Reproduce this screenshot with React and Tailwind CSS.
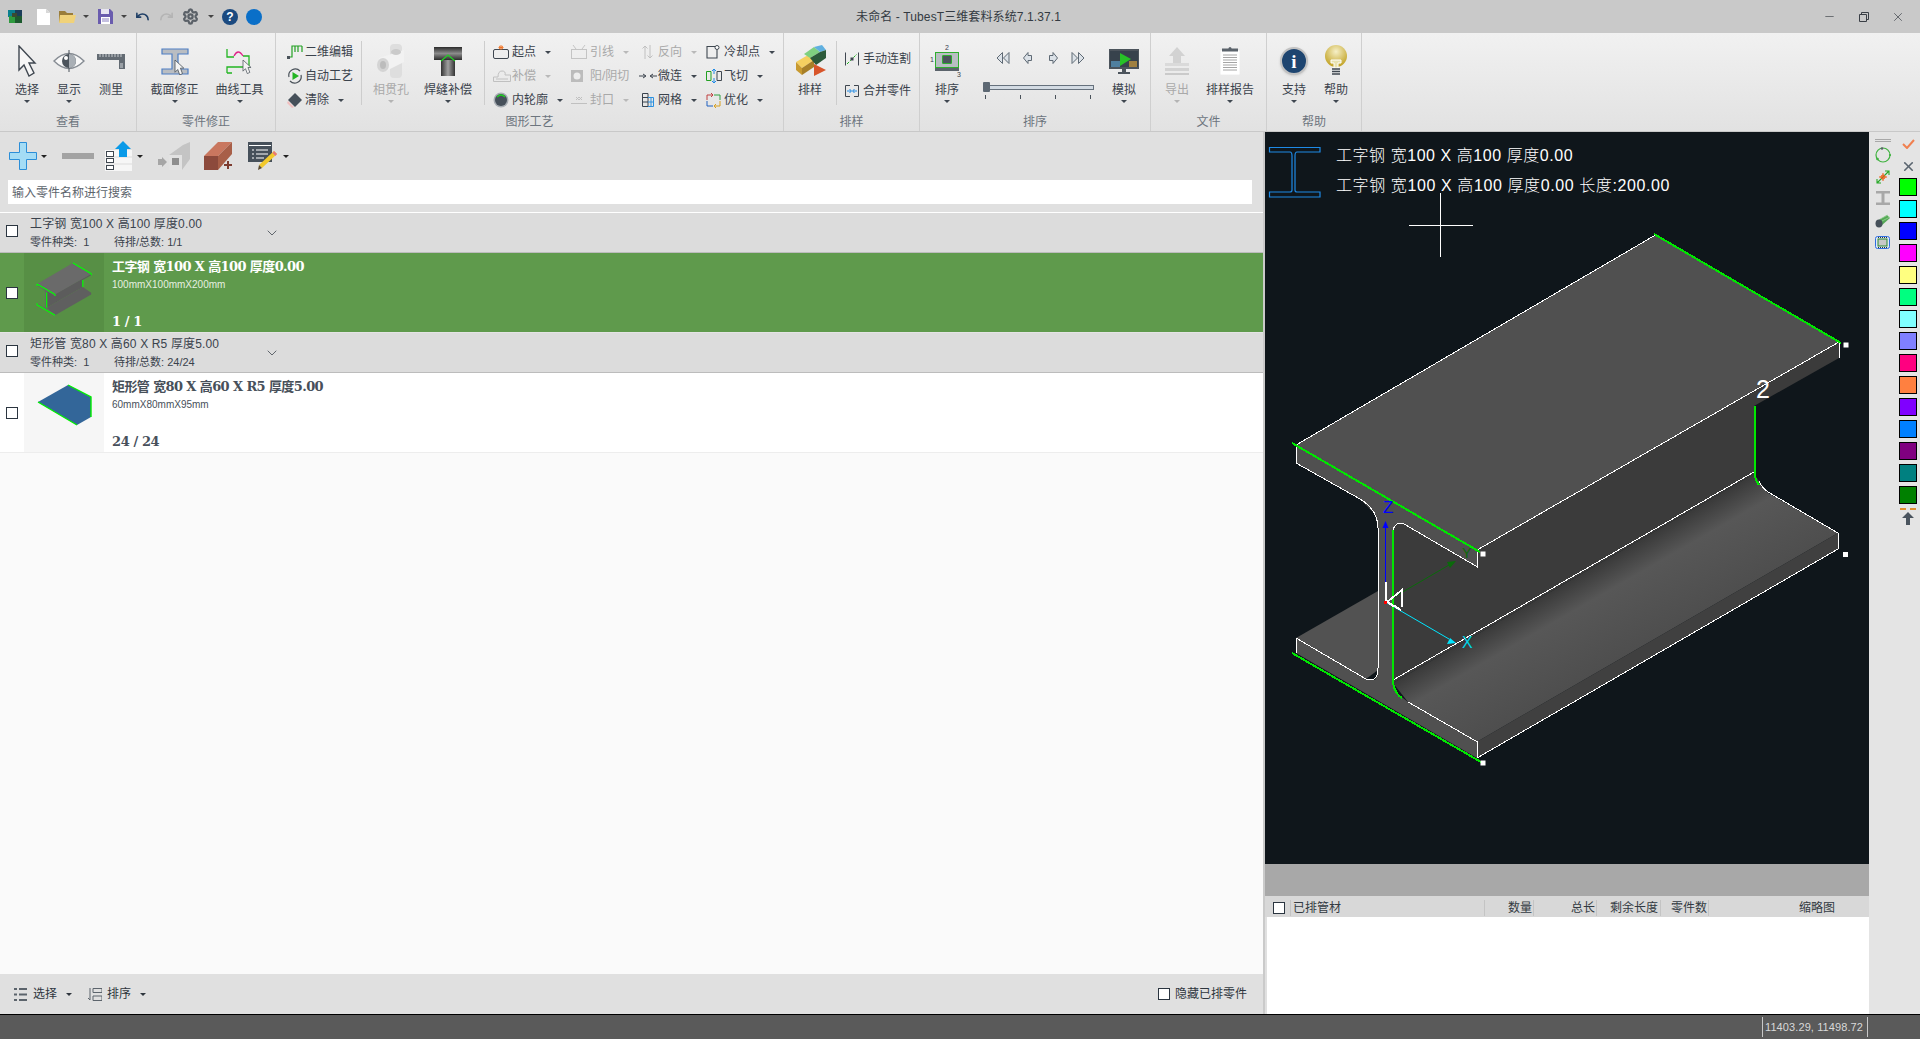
import { Undo, Redo, Settings, Minus, X, ChevronDown } from 'lucide-react';

const swatches = [
  'bg-[#00ff00]', 'bg-[#00ffff]', 'bg-[#0000ff]', 'bg-[#ff00ff]', 'bg-[#ffff80]',
  'bg-[#00ff80]', 'bg-[#80ffff]', 'bg-[#8080ff]', 'bg-[#ff0080]', 'bg-[#ff8040]',
  'bg-[#8000ff]', 'bg-[#0080ff]', 'bg-[#800080]', 'bg-[#008080]', 'bg-[#008000]',
];

const sectionPoints =
  '1296,445 1477,550 1477,566.7 1404,524 1396,524 1393,530 1393,683 1398,694 1408,702 1477,741.7 1477,758 1296,653 1296,638 1366,679 1375,680 1378,670 1378,528 1375,514 1360,499 1296,463';

function Caret({ className = 'border-t-[#3f4750]' }) {
  return <span className={`inline-block h-0 w-0 border-x-[3px] border-t-[3px] border-x-transparent ${className}`} />;
}

function Checkbox({ className = '' }) {
  return <span className={`block h-[12px] w-[12px] shrink-0 border border-[#2b3540] bg-white ${className}`} />;
}

function RibbonGroup({ label, className, children }) {
  return (
    <div className={`flex shrink-0 flex-col border-r border-[#cfcfcf] ${className}`}>
      <div className="flex h-[80px]">{children}</div>
      <div className="h-[18px] text-center leading-[18px] text-[#6d757e]">{label}</div>
    </div>
  );
}

function BigButton({ icon, label, width, disabled, caret = true }) {
  return (
    <div className={`flex shrink-0 flex-col items-center pt-[8px] ${width}`}>
      <div className="flex h-[40px] items-center justify-center">{icon}</div>
      <div className={`h-[18px] whitespace-nowrap leading-[18px] ${disabled ? 'text-[#a9a9a9]' : 'text-[#3a424c]'}`}>{label}</div>
      {caret && <Caret className={`mt-[1px] ${disabled ? 'border-t-[#b4b4b4]' : 'border-t-[#3f4750]'}`} />}
    </div>
  );
}

function SmallButton({ icon, label, slot, disabled, caret = true }) {
  return (
    <div className="flex h-[24px] items-center whitespace-nowrap">
      <span className={`flex shrink-0 items-center ${slot}`}>{icon}</span>
      <span className={disabled ? 'text-[#a9a9a9]' : 'text-[#3a424c]'}>{label}</span>
      {caret && <Caret className={`ml-[9px] ${disabled ? 'border-t-[#b9b9b9]' : 'border-t-[#3f4750]'}`} />}
    </div>
  );
}

function PointerIcon({ x = 0, y = 0, scale = 1 }) {
  return (
    <path
      transform={`translate(${x} ${y}) scale(${scale})`}
      d="M0 0 L13 12 H8 L11 20 L7 22 L4 14 L0 18 Z"
      fill="#f4f4f4"
      stroke="#4a525a"
      strokeWidth="1.2"
    />
  );
}

function TubeThumb() {
  return (
    <svg viewBox="0 0 80 79" className="h-[79px] w-[80px]">
      <polygon points="14,29 44,12 67,24 67,44 53,52" fill="#336699" />
      <path d="M14 29 L53 52 M44 12 L67 24 V44" fill="none" stroke="#00ee00" strokeWidth="1.4" />
    </svg>
  );
}

function BeamThumb() {
  return (
    <svg viewBox="1166 135 800 790" className="h-[79px] w-[80px]">
      <polygon points="1393,515 1477,545 1839,342 1839,358 1754,406 1754,474 1393,683" fill="#5c5c5c" />
      <polygon points="1393,683 1754,474 1838,533 1838,549 1477,758" fill="#5f5f5f" />
      <polygon points="1296,445 1655,235 1839,342 1477,550" fill="#6a6a6a" />
      <polygon points={sectionPoints} fill="#666666" />
      <path
        d="M1296 445 L1477 550 M1655 235 L1839 342 M1296 653 L1477 758 M1393 530 V683 M1754 406 V474 M1839 342 V358 M1296 445 V463 M1296 638 V653 M1477 550 V566"
        fill="none"
        stroke="#00ff00"
        strokeWidth="12"
      />
    </svg>
  );
}

function Canvas() {
  return (
    <div className="relative h-[732px] w-full bg-[#0f161b]">
      <svg viewBox="1265 132 604 732" className="absolute inset-0 h-full w-full">
        <defs>
          <linearGradient id="flange" gradientUnits="userSpaceOnUse" x1="1393" y1="683" x2="1439" y2="763">
            <stop offset="0" stopColor="#3a3a3a" />
            <stop offset="0.3" stopColor="#575757" />
            <stop offset="1" stopColor="#4e4e4e" />
          </linearGradient>
        </defs>

        {/* beam faces */}
        <polygon points="1296,638 1378,591 1378,670 1366,679" fill="#525252" />
        <polygon points="1393,515 1477,545 1839,342 1839,358 1754,406 1754,474 1393,683" fill="#3b3b3b" />
        <polygon points="1393,683 1754,474 1768,493 1838,533 1477,741.7 1408,702" fill="url(#flange)" />
        <polygon points="1477,741.7 1838,533 1838,549 1477,758" fill="#404040" />
        <polygon points="1296,445 1655.5,235 1839,342 1477,550" fill="#505050" />
        <polygon points={sectionPoints} fill="#505050" />

        {/* white edges */}
        <g fill="none" stroke="#ffffff" strokeWidth="1" shapeRendering="crispEdges">
          <path d="M1296 445 L1655.5 235" />
          <path d="M1477 550 L1839 342 V358" />
          <path d="M1296 445 V463 L1360 499 Q1378 510 1378 528 V668 Q1378 683 1366 679 L1296 638 V653" />
          <path d="M1477 550 V566.7 L1404 524 Q1396 521 1393 530" />
          <path d="M1393 680 L1754 472" />
          <path d="M1408 702 L1477 741.7 V758 L1838 549 V533 L1768 492 Q1762 488 1759 481" />
        </g>

        {/* green profile edges */}
        <g fill="none" stroke="#00e600" strokeWidth="2" shapeRendering="crispEdges">
          <path d="M1654 234 L1841 343" />
          <path d="M1292 443 L1480 552" />
          <path d="M1292 653 L1481 762" />
          <path d="M1393 530 V683 Q1395 694 1402 698" />
          <path d="M1754.5 406 V472 Q1755 480 1759 485" />
        </g>

        {/* handle points */}
        <g fill="#ffffff">
          <rect x="1843.5" y="342.5" width="5" height="5" />
          <rect x="1480.5" y="551.5" width="5" height="5" />
          <rect x="1480.5" y="760.5" width="5" height="5" />
          <rect x="1843" y="552" width="5" height="5" />
        </g>

        {/* crosshair */}
        <path d="M1409 225 H1472.5 M1440.5 193 V257" stroke="#ffffff" strokeWidth="1" shapeRendering="crispEdges" />

        {/* axes */}
        <path d="M1385.5 602 V527" stroke="#0000ff" strokeWidth="1" />
        <polygon points="1385.5,521 1382.5,528 1388.5,528" fill="#0000ff" />
        <path d="M1385.5 602 L1449 565" stroke="#0a6a0a" strokeWidth="1" />
        <polygon points="1456,561 1447,562 1450,568" fill="#0a6a0a" />
        <path d="M1385.5 602 L1449 639" stroke="#00e5ff" strokeWidth="1" />
        <polygon points="1456,643 1447,644 1450,638" fill="#00e5ff" />
        <path d="M1385.5 582 V602 M1387 602 L1402 590 V607 M1387 602 L1401 610 M1392 606 H1396" fill="none" stroke="#ffffff" strokeWidth="2" shapeRendering="crispEdges" />
        <rect x="1384" y="601" width="3" height="3" fill="#ff0000" />
        <text x="1383" y="513" fill="#0000ff" fontSize="17" fontFamily="Liberation Sans" fontWeight="300">Z</text>
        <text x="1462" y="558" fill="#0a6a0a" fontSize="14" fontFamily="Liberation Sans">Y</text>
        <text x="1462" y="648" fill="#00d5e8" fontSize="16" fontFamily="Liberation Sans">X</text>
        <text x="1763" y="398" fill="#ffffff" fontSize="25" textAnchor="middle" fontFamily="Liberation Sans">2</text>

        {/* section glyph */}
        <path
          d="M1269.5 147.5 H1320 V152 H1297 Q1295 152 1295 156 V190 Q1295 192 1297 192 H1320 V197 H1269.5 V192 H1290 Q1292 192 1292 190 V156 Q1292 152 1290 152 H1269.5 Z"
          fill="none"
          stroke="#1e8ae6"
          strokeWidth="1.2"
        />
      </svg>

      <div className="absolute left-[71px] top-[13px] whitespace-nowrap text-[16px] font-light leading-[22px] tracking-[0.55px] text-white">工字钢 宽100 X 高100 厚度0.00</div>
      <div className="absolute left-[71px] top-[43px] whitespace-nowrap text-[16px] font-light leading-[22px] tracking-[0.6px] text-white">工字钢 宽100 X 高100 厚度0.00 长度:200.00</div>
    </div>
  );
}

function TitleBar() {
  return (
    <div className="flex h-[33px] shrink-0 items-center bg-[#c9c9c9]">
      <div className="flex flex-1 items-center pl-[8px]">
        <svg viewBox="0 0 14 13" className="h-[13px] w-[14px]">
          <rect x="0" y="0" width="7" height="7" fill="#0b7f8f" />
          <rect x="7" y="0" width="7" height="6" fill="#1b3d5a" />
          <rect x="1" y="6" width="7" height="7" fill="#2e9a3e" />
          <rect x="7" y="6" width="7" height="7" fill="#1c5a2e" />
          <rect x="4" y="3" width="5" height="4" fill="#3a4a30" />
        </svg>
        <svg viewBox="0 0 13 16" className="ml-[15px] h-[16px] w-[13px]">
          <path d="M0 0 H9 L13 4 V16 H0 Z" fill="#ffffff" />
          <path d="M9 0 V4 H13" fill="#d8d8d8" />
        </svg>
        <svg viewBox="0 0 17 13" className="ml-[9px] h-[13px] w-[17px]">
          <path d="M0 1 H6 L8 3 H14 V13 H0 Z" fill="#9a7d3a" />
          <path d="M1 5 H17 L15 13 H0 Z" fill="#f0d27a" />
        </svg>
        <Caret className="ml-[7px] border-t-[#444444]" />
        <svg viewBox="0 0 15 15" className="ml-[9px] h-[15px] w-[15px]">
          <path d="M0 0 H12 L15 3 V15 H0 Z" fill="#6a5cae" />
          <rect x="3" y="0" width="8" height="5" fill="#e8e6f2" />
          <rect x="3" y="8" width="9" height="7" fill="#ffffff" />
          <path d="M4 10 H11 M4 12 H11" stroke="#8a80c0" strokeWidth="1" />
        </svg>
        <Caret className="ml-[8px] border-t-[#444444]" />
        <Undo size={15} strokeWidth={2.6} className="ml-[8px] text-[#1f3f66]" />
        <Redo size={15} strokeWidth={2.6} className="ml-[9px] text-[#b4b4b4]" />
        <Settings size={17} strokeWidth={3.2} className="ml-[8px] text-[#5b6168]" />
        <Caret className="ml-[9px] border-t-[#444444]" />
        <div className="ml-[8px] flex h-[16px] w-[16px] items-center justify-center rounded-full bg-[#1b4a80] text-[12px] font-bold leading-none text-white">?</div>
        <div className="ml-[8px] h-[16px] w-[16px] rounded-full bg-[#0a6fc8]" />
      </div>
      <div className="whitespace-nowrap pl-[4px] tracking-[0.1px] text-[#333a42]">未命名 - TubesT三维套料系统7.1.37.1</div>
      <div className="flex flex-1 items-center justify-end pr-[15px] text-[#3a3f46]">
        <Minus size={13} strokeWidth={1.2} />
        <svg viewBox="0 0 10 10" className="ml-[23px] h-[10px] w-[10px]">
          <path d="M0.5 2.5 H7.5 V9.5 H0.5 Z M2.5 2.5 V0.5 H9.5 V7.5 H7.5" fill="none" stroke="#3a3f46" strokeWidth="1" />
        </svg>
        <X size={14} strokeWidth={1.2} className="ml-[22px]" />
      </div>
    </div>
  );
}

function Ribbon() {
  return (
    <div className="flex h-[99px] shrink-0 border-b border-[#c8c8c8] bg-linear-to-b from-[#f1f1f1] to-[#e2e2e2]">
      <RibbonGroup label="查看" className="w-[137px]">
        <div className="flex pl-[6px]">
          <BigButton
            width="w-[42px]"
            label="选择"
            icon={
              <svg viewBox="0 0 20 32" className="h-[32px] w-[20px]">
                <path d="M2 1 L18 18 H12 L17 28 L12 31 L7 20 L2 25 Z" fill="#f6f6f6" stroke="#3f4750" strokeWidth="1.4" />
              </svg>
            }
          />
          <BigButton
            width="w-[42px]"
            label="显示"
            icon={
              <svg viewBox="0 0 32 24" className="h-[24px] w-[32px]">
                <path d="M1 12 Q16 -3 31 12 Q16 27 1 12 Z" fill="#f8f8f8" stroke="#878d94" strokeWidth="1.4" />
                <path d="M16 1 V23" stroke="#4a525a" strokeWidth="1" />
                <circle cx="16" cy="12" r="7" fill="#4c545c" />
                <path d="M16 5 A7 7 0 0 1 16 19 Z" fill="#a9afb5" />
                <circle cx="13" cy="9" r="2" fill="#ffffff" />
              </svg>
            }
          />
          <BigButton
            width="w-[42px]"
            caret={false}
            label="测里"
            icon={
              <svg viewBox="0 0 28 15" className="h-[15px] w-[28px]">
                <path d="M0 0 H28 V15 H22 V6 H0 Z" fill="#636b73" />
                <path d="M3 0 V3 M6 0 V3 M9 0 V3 M12 0 V3 M15 0 V3 M18 0 V3 M21 0 V3 M24 0 V3" stroke="#c8ccd0" strokeWidth="1" />
                <rect x="23" y="9" width="3" height="5" fill="#9aa0a6" />
              </svg>
            }
          />
        </div>
      </RibbonGroup>

      <RibbonGroup label="零件修正" className="w-[139px]">
        <div className="flex pl-[5px]">
          <BigButton
            width="w-[65px]"
            label="截面修正"
            icon={
              <svg viewBox="0 0 28 27" className="h-[27px] w-[28px]">
                <path d="M1 1 H27 V6 H17 V21 H27 V26 H1 V21 H11 V6 H1 Z" fill="#b9bdc2" stroke="#4f7fc4" strokeWidth="1.2" />
                <PointerIcon x={14} y={12} scale={0.68} />
              </svg>
            }
          />
          <BigButton
            width="w-[65px]"
            label="曲线工具"
            icon={
              <svg viewBox="0 0 28 26" className="h-[26px] w-[28px]">
                <path d="M1 1 V9 H8 M1 25 V19 H23 V8 H17 M1 25 H6" fill="none" stroke="#22b522" strokeWidth="1.3" />
                <path d="M8 8 Q12 0 17 8" fill="none" stroke="#e0258a" strokeWidth="1.3" />
                <PointerIcon x={17} y={12} scale={0.62} />
              </svg>
            }
          />
        </div>
      </RibbonGroup>

      <RibbonGroup label="图形工艺" className="w-[508px]">
        <div className="flex pl-[11px] pt-[7px]">
          <div className="w-[74px]">
            <SmallButton
              caret={false}
              slot="w-[18px]"
              label="二维编辑"
              icon={
                <svg viewBox="0 0 16 14" className="h-[14px] w-[16px]">
                  <path d="M1 12 H5 V1 H15 M15 1 V7 M8 1 V7 M11 1 V7" fill="none" stroke="#22a022" strokeWidth="1.2" />
                  <rect x="0" y="11" width="3" height="3" fill="#4a525a" />
                </svg>
              }
            />
            <SmallButton
              caret={false}
              slot="w-[18px]"
              label="自动工艺"
              icon={
                <svg viewBox="0 0 16 16" className="h-[16px] w-[16px]">
                  <path d="M2 9 A6.5 6.5 0 0 1 13 3 M14 7 A6.5 6.5 0 0 1 3 13" fill="none" stroke="#4a525a" strokeWidth="1.2" />
                  <polygon points="5.5,4 12,8 5.5,12" fill="#22b522" />
                </svg>
              }
            />
            <SmallButton
              slot="w-[18px]"
              label="清除"
              icon={
                <svg viewBox="0 0 16 16" className="h-[16px] w-[16px]">
                  <polygon points="8,1 15,8 8,15 1,8" fill="#46505a" />
                  <polygon points="1,9 7,15 5,16 0,11" fill="#f2c0c0" />
                </svg>
              }
            />
          </div>
        </div>
        <div className="my-[8px] w-px shrink-0 bg-[#cdcdcd]" />
        <BigButton
          disabled
          width="w-[58px]"
          label="相贯孔"
          icon={
            <svg viewBox="0 0 30 34" className="h-[34px] w-[30px]">
              <rect x="14" y="0" width="12" height="34" rx="4" fill="#dedede" />
              <path d="M3 14 L28 6 V18 L8 28 Z" fill="#f2f2f2" />
              <ellipse cx="20" cy="8" rx="5" ry="3" fill="#cacaca" />
              <ellipse cx="7" cy="21" rx="6" ry="7" fill="#d4d4d4" />
              <ellipse cx="7" cy="21" rx="3" ry="4" fill="#bcbcbc" />
            </svg>
          }
        />
        <BigButton
          width="w-[56px]"
          label="焊缝补偿"
          icon={
            <svg viewBox="0 0 28 29" className="h-[29px] w-[28px]">
              <defs>
                <linearGradient id="pipeH" x1="0" y1="0" x2="0" y2="1">
                  <stop offset="0" stopColor="#2c2c2c" />
                  <stop offset="0.5" stopColor="#8c8c8c" />
                  <stop offset="1" stopColor="#2c2c2c" />
                </linearGradient>
                <linearGradient id="pipeV" x1="0" y1="0" x2="1" y2="0">
                  <stop offset="0" stopColor="#333333" />
                  <stop offset="0.5" stopColor="#a0a0a0" />
                  <stop offset="1" stopColor="#333333" />
                </linearGradient>
              </defs>
              <rect x="7" y="9" width="14" height="20" fill="url(#pipeV)" />
              <rect x="0" y="0" width="28" height="13" fill="url(#pipeH)" />
              <path d="M7 14 L14 8 L21 14" fill="none" stroke="#22d022" strokeWidth="1.2" />
            </svg>
          }
        />
        <div className="my-[8px] ml-[8px] w-px shrink-0 bg-[#cdcdcd]" />
        <div className="ml-[8px] w-[78px] shrink-0 pt-[7px]">
          <SmallButton
            slot="w-[19px]"
            label="起点"
            icon={
              <svg viewBox="0 0 16 14" className="h-[14px] w-[16px]">
                <rect x="0.5" y="4.5" width="15" height="9" rx="1.5" fill="none" stroke="#3f4750" />
                <path d="M8 0 V5 M5.5 2.5 H10.5 M6 1 L10 4 M10 1 L6 4" stroke="#f07020" strokeWidth="0.9" />
              </svg>
            }
          />
          <SmallButton
            disabled
            slot="w-[19px]"
            label="补偿"
            icon={
              <svg viewBox="0 0 18 12" className="h-[12px] w-[18px]">
                <path d="M0.5 11.5 V7 H5 Q5 1 9 1 Q13 1 12 5 H17.5 V11.5 Z M3 9 H15" fill="none" stroke="#c0c0c0" />
              </svg>
            }
          />
          <SmallButton
            slot="w-[19px]"
            label="内轮廓"
            icon={
              <svg viewBox="0 0 16 16" className="h-[16px] w-[16px]">
                <circle cx="8" cy="8" r="7.5" fill="#a7adb3" />
                <circle cx="8" cy="8" r="6" fill="#46505a" />
                <path d="M4 5 Q8 1 12 5" fill="none" stroke="#22d022" strokeWidth="1.2" />
              </svg>
            }
          />
        </div>
        <div className="w-[71px] shrink-0 pt-[7px]">
          <SmallButton
            disabled
            slot="w-[19px]"
            label="引线"
            icon={
              <svg viewBox="0 0 16 14" className="h-[14px] w-[16px]">
                <rect x="0.5" y="4.5" width="15" height="9" fill="none" stroke="#c4c4c4" />
                <path d="M2 0 L5 4 M14 0 L11 4" stroke="#c4c4c4" />
              </svg>
            }
          />
          <SmallButton
            disabled
            caret={false}
            slot="w-[19px]"
            label="阳/阴切"
            icon={
              <svg viewBox="0 0 12 12" className="h-[12px] w-[12px]">
                <rect width="12" height="12" fill="#bcbcbc" />
                <circle cx="6" cy="6" r="3.5" fill="#eeeeee" />
              </svg>
            }
          />
          <SmallButton
            disabled
            slot="w-[19px]"
            label="封口"
            icon={
              <svg viewBox="0 0 16 8" className="h-[8px] w-[16px]">
                <path d="M0 7.5 H16 M5 1 L8 4 L11 1 M5 4 L8 1 L11 4" fill="none" stroke="#c0c0c0" />
              </svg>
            }
          />
        </div>
        <div className="w-[64px] shrink-0 pt-[7px]">
          <SmallButton
            disabled
            slot="w-[16px]"
            label="反向"
            icon={
              <svg viewBox="0 0 11 14" className="h-[14px] w-[11px]">
                <path d="M3 14 V1 M0.5 3.5 L3 1 L5.5 3.5 M8 0 V13 M5.5 10.5 L8 13 L10.5 10.5" fill="none" stroke="#c0c0c0" />
              </svg>
            }
          />
          <SmallButton
            slot="w-[16px]"
            label="微连"
            icon={
              <svg viewBox="0 0 18 6" className="-ml-[3px] h-[6px] w-[18px]">
                <path d="M0 3 H6 M4 1 L7 3 L4 5 M12 3 H18 M14 1 L11 3 L14 5" fill="none" stroke="#3a424c" />
              </svg>
            }
          />
          <SmallButton
            slot="w-[16px]"
            label="网格"
            icon={
              <svg viewBox="0 0 12 14" className="h-[14px] w-[12px]">
                <path d="M0.5 0.5 H6 V13.5 H0.5 Z M0.5 4.5 H6 M0.5 9 H6" fill="none" stroke="#3a424c" />
                <path d="M6 4.5 H11.5 V13.5 H6 M6 9 H11.5 M9 4.5 V13.5" fill="none" stroke="#2a90e0" />
              </svg>
            }
          />
        </div>
        <div className="shrink-0 pt-[7px]">
          <SmallButton
            slot="w-[18px]"
            label="冷却点"
            icon={
              <svg viewBox="0 0 14 14" className="h-[14px] w-[14px]">
                <path d="M9 1.5 H1 V13 H11 V5" fill="none" stroke="#3f4750" strokeWidth="1.1" />
                <circle cx="11" cy="2.5" r="2" fill="#ffffff" stroke="#3f4750" />
              </svg>
            }
          />
          <SmallButton
            slot="w-[18px]"
            label="飞切"
            icon={
              <svg viewBox="0 0 16 14" className="h-[14px] w-[16px]">
                <path d="M0.5 2.5 H5 V11.5 H0.5 Z" fill="none" stroke="#22a022" />
                <path d="M11 2.5 H15.5 V11.5 H11 Z" fill="none" stroke="#3f4750" />
                <path d="M8 0 V5 M6 2 L8 0 L10 2 M8 9 V14 M6 12 L8 14 L10 12" fill="none" stroke="#1e8ae6" />
              </svg>
            }
          />
          <SmallButton
            slot="w-[18px]"
            label="优化"
            icon={
              <svg viewBox="0 0 15 15" className="h-[15px] w-[15px]">
                <path d="M1 7 V2 H7 M5 0 L7 2 L5 4" fill="none" stroke="#c04040" />
                <path d="M8 2 H14 V7" fill="none" stroke="#30a040" />
                <path d="M14 8 V13 H8 M10 11 L8 13 L10 15" fill="none" stroke="#d8a020" />
                <path d="M7 13 H1 V8" fill="none" stroke="#2060c0" />
              </svg>
            }
          />
        </div>
      </RibbonGroup>

      <RibbonGroup label="排样" className="w-[136px]">
        <BigButton
          caret={false}
          width="w-[52px]"
          label="排样"
          icon={
            <svg viewBox="0 0 32 32" className="h-[32px] w-[32px]">
              <polygon points="2,17 14,10 20,15 8,23" fill="#f5d060" />
              <polygon points="2,17 8,23 8,30 2,25" fill="#c89a30" />
              <polygon points="8,23 20,15 20,22 8,30" fill="#a88028" />
              <polygon points="10,9 20,2 26,7 16,13" fill="#80d080" />
              <polygon points="20,2 28,0 32,5 26,7" fill="#60b0e0" />
              <polygon points="16,13 26,7 32,5 32,13 22,20" fill="#2c5a3a" />
              <polygon points="20,19 32,25 20,31" fill="#d8552a" />
            </svg>
          }
        />
        <div className="my-[8px] w-px shrink-0 bg-[#cdcdcd]" />
        <div className="flex flex-col pl-[8px] pt-[10px]">
          <div className="flex h-[32px] items-center whitespace-nowrap text-[#3a424c]">
            <svg viewBox="0 0 14 14" className="mr-[4px] h-[14px] w-[14px]">
              <path d="M0.5 0.5 V13.5 M13.5 0.5 V13.5" stroke="#3f4750" />
              <path d="M2 12 L12 2" stroke="#22b522" strokeDasharray="3 1.5" />
              <rect x="5.5" y="5.5" width="3" height="3" fill="#3f4750" />
            </svg>
            手动连割
          </div>
          <div className="flex h-[32px] items-center whitespace-nowrap text-[#3a424c]">
            <svg viewBox="0 0 14 12" className="mr-[4px] h-[12px] w-[14px]">
              <path d="M5 0.5 H0.5 V11.5 H5 M9 0.5 H13.5 V11.5 H9" fill="none" stroke="#3f4750" />
              <path d="M2 6 H6 M4.5 4 L6.5 6 L4.5 8 M12 6 H8 M9.5 4 L7.5 6 L9.5 8" fill="none" stroke="#1e8ae6" />
            </svg>
            合并零件
          </div>
        </div>
      </RibbonGroup>

      <RibbonGroup label="排序" className="w-[231px]">
        <BigButton
          width="w-[54px]"
          label="排序"
          icon={
            <div className="flex flex-col items-center">
              <span className="h-[8px] text-[7px] leading-[8px] text-[#3a424c]">2</span>
              <div className="flex items-center">
                <span className="mr-[1px] text-[7px] leading-none text-[#3a424c]">1</span>
                <div className="flex h-[16px] w-[24px] items-center justify-center border border-[#2fae2f] bg-[#b9bec3]">
                  <span className="block h-[9px] w-[10px] rounded-[1px] border border-[#2fae2f] bg-[#4c545c]" />
                </div>
                <span className="ml-[1px] w-[4px]" />
              </div>
              <span className="h-[3px] w-[24px] bg-[#5b636b]" />
              <span className="ml-[24px] h-[8px] text-[7px] leading-[8px] text-[#3a424c]">3</span>
            </div>
          }
        />
        <div className="flex w-[128px] shrink-0 flex-col items-center pt-[16px]">
          <div className="ml-[4px] flex h-[18px] items-center gap-[13px]">
            <svg viewBox="0 0 14 12" className="h-[12px] w-[14px]">
              <path d="M6.5 0.5 L1 6 L6.5 11.5 Z M13 0.5 L7.5 6 L13 11.5 Z" fill="#dce2e8" stroke="#5f6a75" />
            </svg>
            <svg viewBox="0 0 9 12" className="h-[12px] w-[9px]">
              <path d="M5 0.5 L0.5 6 L5 11.5 V8.5 H8.5 V3.5 H5 Z" fill="#dce2e8" stroke="#5f6a75" />
            </svg>
            <svg viewBox="0 0 9 12" className="ml-[4px] h-[12px] w-[9px]">
              <path d="M4 0.5 L8.5 6 L4 11.5 V8.5 H0.5 V3.5 H4 Z" fill="#dce2e8" stroke="#5f6a75" />
            </svg>
            <svg viewBox="0 0 14 12" className="h-[12px] w-[14px]">
              <path d="M1 0.5 L6.5 6 L1 11.5 Z M7.5 0.5 L13 6 L7.5 11.5 Z" fill="#dce2e8" stroke="#5f6a75" />
            </svg>
          </div>
          <div className="mt-[18px] w-[111px]">
            <div className="relative h-[5px] w-full border border-[#66717c] bg-[#d3dbe3]">
              <span className="absolute left-[-1px] top-[-4px] h-[10px] w-[7px] rounded-[1px] bg-[#5d6873]" />
            </div>
            <div className="mt-[5px] flex justify-between px-[2px]">
              <span className="h-[4px] w-px bg-[#4a525a]" />
              <span className="h-[4px] w-px bg-[#4a525a]" />
              <span className="h-[4px] w-px bg-[#4a525a]" />
              <span className="h-[4px] w-px bg-[#4a525a]" />
            </div>
          </div>
        </div>
        <BigButton
          width="w-[44px]"
          label="模拟"
          icon={
            <svg viewBox="0 0 30 25" className="h-[25px] w-[30px]">
              <rect x="0" y="0" width="30" height="20" fill="#4c545c" />
              <rect x="1" y="2" width="28" height="16" fill="#37424c" />
              <rect x="2" y="12" width="9" height="6" fill="#4f7f9f" />
              <rect x="20" y="12" width="8" height="6" fill="#a08040" />
              <polygon points="11,4 22,10 11,17" fill="#27c227" />
              <rect x="13" y="20" width="4" height="3" fill="#4c545c" />
              <rect x="9" y="23" width="12" height="2" fill="#4c545c" />
            </svg>
          }
        />
      </RibbonGroup>

      <RibbonGroup label="文件" className="w-[116px]">
        <BigButton
          disabled
          width="w-[52px]"
          label="导出"
          icon={
            <svg viewBox="0 0 24 28" className="h-[28px] w-[24px]">
              <polygon points="12,0 20,9 16,9 16,17 8,17 8,9 4,9" fill="#d2d2d2" />
              <rect x="0" y="16" width="24" height="3" fill="#dadada" />
              <rect x="0" y="21" width="24" height="3" fill="#d2d2d2" />
              <rect x="0" y="26" width="24" height="2" fill="#cacaca" />
            </svg>
          }
        />
        <BigButton
          width="w-[54px]"
          label="排样报告"
          icon={
            <svg viewBox="0 0 20 28" className="h-[28px] w-[20px]">
              <rect x="0" y="3" width="20" height="25" fill="#ffffff" stroke="#dcdcdc" strokeWidth="0.5" />
              <rect x="2" y="1.5" width="16" height="3" fill="#5b636b" />
              <circle cx="10" cy="1.5" r="1.5" fill="#5b636b" />
              <path d="M3 8 H17 M3 10.5 H17 M3 13 H17 M3 15.5 H17 M3 18 H17 M3 20.5 H17 M3 23 H17" stroke="#9a9a9a" strokeWidth="0.9" />
            </svg>
          }
        />
      </RibbonGroup>

      <RibbonGroup label="帮助" className="w-[95px]">
        <div className="flex pl-[6px]">
          <BigButton
            width="w-[42px]"
            label="支持"
            icon={
              <div className="flex h-[28px] w-[28px] items-center justify-center rounded-full border-2 border-[#c2c2c2] bg-[#1e4570] font-['Liberation_Serif'] text-[19px] font-bold leading-none text-white shadow-sm">i</div>
            }
          />
          <BigButton
            width="w-[42px]"
            label="帮助"
            icon={
              <svg viewBox="0 0 24 32" className="h-[32px] w-[24px]">
                <defs>
                  <radialGradient id="bulb" cx="0.5" cy="0.3" r="0.7">
                    <stop offset="0" stopColor="#f6f0c8" />
                    <stop offset="1" stopColor="#c0a020" />
                  </radialGradient>
                </defs>
                <ellipse cx="12" cy="11" rx="11" ry="11" fill="url(#bulb)" />
                <path d="M7 15 H17 V18 H14 V23 H10 V18 H7 Z" fill="#e8e2b0" stroke="#ffffff" strokeWidth="1" />
                <path d="M8 24 H16 M8 26.5 H16 M8 29 H16" stroke="#3f4750" strokeWidth="1.6" />
              </svg>
            }
          />
        </div>
      </RibbonGroup>
    </div>
  );
}

function PartsToolbar() {
  return (
    <div className="flex h-[48px] shrink-0 items-center pl-[9px]">
      <svg viewBox="0 0 28 28" className="h-[28px] w-[28px]">
        <path d="M10.5 0.5 H17.5 V10.5 H27.5 V17.5 H17.5 V27.5 H10.5 V17.5 H0.5 V10.5 H10.5 Z" fill="#a4dcf5" stroke="#2b8ed8" />
      </svg>
      <Caret className="ml-[4px] border-t-[#222222]" />
      <span className="ml-[15px] h-[6px] w-[32px] bg-[#a3a3a3]" />
      <svg viewBox="0 0 28 30" className="ml-[11px] h-[30px] w-[28px]">
        <rect x="0" y="9" width="27" height="21" fill="#f6f6f6" />
        <path d="M1 16 H27 M1 23 H27" stroke="#dcdcdc" />
        <rect x="1.5" y="10.5" width="7" height="5" fill="#ffffff" stroke="#3f4750" />
        <rect x="1.5" y="17.5" width="7" height="4" fill="#ffffff" stroke="#3f4750" />
        <rect x="1.5" y="24.5" width="7" height="4" fill="#ffffff" stroke="#3f4750" />
        <polygon points="18,0 26,8 22,8 22,16 14,16 14,8 10,8" fill="#0a9ae8" />
      </svg>
      <Caret className="ml-[4px] border-t-[#222222]" />
      <svg viewBox="0 0 32 28" className="ml-[15px] h-[28px] w-[32px]">
        <polygon points="11,13 25,3 32,0 32,17 24,28 11,28" fill="#c4c4c4" />
        <polygon points="11,13 24,13 24,28 11,28" fill="#e2e2e2" />
        <rect x="14" y="16" width="7" height="7" fill="#8e8e8e" />
        <polygon points="0,17 4,17 4,15 9,20 4,25 4,23 0,23" fill="#a6a6a6" />
      </svg>
      <svg viewBox="0 0 28 28" className="ml-[14px] h-[28px] w-[28px]">
        <polygon points="0,14 14,0 28,0 14,14" fill="#c9775f" />
        <polygon points="0,14 14,14 14,28 0,28" fill="#8c4a3c" />
        <polygon points="14,14 28,0 28,12 14,28" fill="#a85f48" />
        <path d="M24 19 V27 M20 23 H28" stroke="#7d3c30" strokeWidth="2" />
      </svg>
      <svg viewBox="0 0 30 28" className="ml-[16px] h-[28px] w-[30px]">
        <rect x="0" y="0" width="24" height="20" fill="#46505a" />
        <rect x="1" y="3" width="22" height="1" fill="#ffffff" />
        <path d="M4 8 H6 M8 8 H20 M4 12 H6 M8 12 H20 M4 16 H6 M8 16 H16" stroke="#ffffff" strokeWidth="1.2" />
        <polygon points="26,9 29,12 14,26 11,23" fill="#f2c92c" />
        <polygon points="26,9 29,12 27.5,14 24.5,11" fill="#e87878" />
        <polygon points="11,23 14,26 10,28" fill="#5a4a30" />
      </svg>
      <Caret className="ml-[5px] border-t-[#222222]" />
    </div>
  );
}

function GroupRow({ title, stock }) {
  return (
    <div className="flex h-[40px] shrink-0 items-center border-b border-[#bcbcbc] bg-[#dcdcdc] text-[#3a424c]">
      <Checkbox className="mb-[4px] ml-[6px]" />
      <div className="ml-[12px] w-[234px]">
        <div className="h-[18px] whitespace-nowrap leading-[18px] tracking-[0.15px]">{title}</div>
        <div className="flex h-[18px] leading-[18px]">
          <span className="w-[84px] whitespace-pre text-[11px]">零件种类:  1</span>
          <span className="whitespace-pre text-[11px]">待排/总数: {stock}</span>
        </div>
      </div>
      <ChevronDown size={16} strokeWidth={1.3} className="text-[#4c545c]" />
    </div>
  );
}

function PartRow({ thumb, title, size, count, active }) {
  return (
    <div className={`flex h-[80px] shrink-0 items-center border-b ${active ? 'border-[#e4e4e4] bg-[#5f9a4c] text-white' : 'border-[#ededed] bg-white text-[#47505a]'}`}>
      <Checkbox className="ml-[6px]" />
      <div className={`ml-[6px] h-[79px] w-[80px] shrink-0 ${active ? 'bg-[#578f45]' : 'bg-[#f6f6f6]'}`}>{thumb}</div>
      <div className="flex h-[79px] flex-col pl-[8px] pt-[5px]">
        <div className="h-[18px] whitespace-nowrap text-[13px] font-bold leading-[18px] tracking-[-0.6px] [font-family:DejaVu_Serif,Noto_Sans_CJK_SC,serif]">{title}</div>
        <div className={`mt-[2px] h-[14px] whitespace-nowrap text-[10px] leading-[14px] ${active ? 'text-[#e6f0e0]' : ''}`}>{size}</div>
        <div className="mt-auto h-[20px] whitespace-pre text-[13px] font-bold leading-[20px] tracking-[-0.4px] [font-family:DejaVu_Serif,serif]">{count}</div>
      </div>
    </div>
  );
}

function LeftPanel() {
  return (
    <div className="flex w-[1263px] shrink-0 flex-col bg-[#fafafa]">
      <div className="bg-[#e0e0e0]">
        <PartsToolbar />
        <div className="ml-[8px] mr-[11px] flex h-[24px] items-center bg-white pl-[4px] pt-[1px] text-[#5c646c]">输入零件名称进行搜索</div>
        <div className="h-[9px] border-b border-white" />
      </div>
      <GroupRow title="工字钢 宽100 X 高100 厚度0.00" stock="1/1" />
      <PartRow active thumb={<BeamThumb />} title="工字钢 宽100 X 高100 厚度0.00" size="100mmX100mmX200mm" count="1 / 1" />
      <GroupRow title="矩形管 宽80 X 高60 X R5 厚度5.00" stock="24/24" />
      <PartRow thumb={<TubeThumb />} title="矩形管 宽80 X 高60 X R5 厚度5.00" size="60mmX80mmX95mm" count="24 / 24" />
      <div className="flex-1" />
      <div className="flex h-[40px] shrink-0 items-center bg-[#e0e0e0] pl-[14px] text-[#2e353d]">
        <svg viewBox="0 0 13 13" className="h-[13px] w-[13px]">
          <path d="M0 1 H3 M5 1 H13 M0 6.5 H3 M5 6.5 H13 M0 12 H3 M5 12 H13" stroke="#5c646c" strokeWidth="2" />
        </svg>
        <span className="ml-[6px]">选择</span>
        <Caret className="ml-[9px] border-t-[#2e353d]" />
        <svg viewBox="0 0 14 13" className="ml-[16px] h-[13px] w-[14px]">
          <path d="M2 0 V12 M0 10 L2 12 M5 0.5 H14 V4.5 H5 Z M5 8 H14 V12.5 H5 Z" fill="none" stroke="#5c646c" />
        </svg>
        <span className="ml-[5px]">排序</span>
        <Caret className="ml-[9px] border-t-[#2e353d]" />
        <div className="ml-auto mr-[16px] flex items-center">
          <Checkbox />
          <span className="ml-[5px]">隐藏已排零件</span>
        </div>
      </div>
    </div>
  );
}

function RightPanel() {
  return (
    <div className="flex w-[604px] shrink-0 flex-col">
      <Canvas />
      <div className="h-[32px] bg-[#a8a8a8]" />
      <div className="flex h-[21px] items-center bg-[#d8d8d8] pt-[2px] text-[#333a42]">
        <Checkbox className="ml-[8px] mr-[5px]" />
        <div className="w-[194px] border-l border-[#c4c4c4] pl-[2px] leading-[16px]">已排管材</div>
        <div className="w-[50px] border-x border-[#c4c4c4] pr-[1px] text-right leading-[16px]">数量</div>
        <div className="w-[63px] border-r border-[#c4c4c4] pr-[1px] text-right leading-[16px]">总长</div>
        <div className="w-[64px] border-r border-[#c4c4c4] pr-[2px] text-right leading-[16px]">剩余长度</div>
        <div className="w-[48px] border-r border-[#c4c4c4] pr-[1px] text-right leading-[16px]">零件数</div>
        <div className="flex-1 pr-[34px] text-right leading-[16px]">缩略图</div>
      </div>
      <div className="flex-1 border-l-2 border-[#e0e0e0] bg-white" />
    </div>
  );
}

function SideStrip() {
  return (
    <div className="flex flex-1 bg-[#e4e4e4]">
      <div className="flex w-[30px] flex-col items-center pr-[3px] pt-[7px]">
        <div className="h-[3px] w-[16px] border-y border-[#a8a8a8]" />
        <svg viewBox="0 0 16 16" className="mt-[5px] h-[16px] w-[16px]">
          <circle cx="8" cy="8" r="7" fill="none" stroke="#3fb23f" strokeWidth="1.2" />
          <circle cx="7" cy="1.5" r="1.3" fill="#5b636b" />
          <circle cx="2.5" cy="12" r="1.3" fill="#3fb23f" />
          <circle cx="15" cy="8" r="1.1" fill="#3fb23f" />
        </svg>
        <svg viewBox="0 0 14 14" className="mt-[7px] h-[14px] w-[14px]">
          <path d="M1 13 L13 1 M9 1 H13 V5 M1 9 V13 H5" fill="none" stroke="#27a827" strokeWidth="1.1" />
          <path d="M7 3 V11 M3 7 H11" stroke="#f05a14" strokeWidth="1" />
          <circle cx="7" cy="7" r="2" fill="none" stroke="#f05a14" />
        </svg>
        <svg viewBox="0 0 14 14" className="mt-[7px] h-[14px] w-[14px]">
          <path d="M0 0 H14 V2.5 H8.5 V11.5 H14 V14 H0 V11.5 H5.5 V2.5 H0 Z" fill="#a8a8a8" />
        </svg>
        <svg viewBox="0 0 16 14" className="mt-[9px] h-[14px] w-[16px]">
          <polygon points="2,7 12,1 15,4 6,12" fill="#55a855" />
          <ellipse cx="4" cy="9.5" rx="3.5" ry="4" fill="#46505a" />
          <path d="M5 5 L13 1 M7 7 L15 3" stroke="#9ed89e" strokeWidth="0.7" />
        </svg>
        <svg viewBox="0 0 15 13" className="mt-[8px] h-[13px] w-[15px]">
          <rect x="0.5" y="0.5" width="14" height="12" rx="2" fill="#dfe8fa" stroke="#2f6fe0" />
          <rect x="3" y="3" width="9" height="7" fill="#c8c8c8" stroke="#2e8a2e" />
          <path d="M3 1.5 H12 M3 11.5 H12" stroke="#333333" strokeDasharray="1 1" />
        </svg>
      </div>
      <div className="flex w-[21px] flex-col items-start">
        <svg viewBox="0 0 13 10" className="ml-[3px] mt-[7px] h-[10px] w-[13px]">
          <path d="M1 5 L5 9 L12 1" fill="none" stroke="#f08050" strokeWidth="2" />
        </svg>
        <X size={15} strokeWidth={2.6} className="ml-[2px] mt-[10px] text-[#5a6570]" />
        <div className="mt-[4px] flex flex-col gap-[4px]">
          {swatches.map((c) => (
            <span key={c} className={`block h-[18px] w-[18px] border border-black ${c}`} />
          ))}
        </div>
        <div className="ml-[1px] mt-[4px] h-[2px] w-[16px] border-t-2 border-dashed border-[#e09030]" />
        <svg viewBox="0 0 12 13" className="ml-[3px] mt-[2px] h-[13px] w-[12px]">
          <polygon points="6,0 12,6 8,6 8,13 4,13 4,6 0,6" fill="#4a545e" />
        </svg>
      </div>
    </div>
  );
}

export default function App() {
  return (
    <div className="flex h-[1039px] w-[1920px] flex-col overflow-hidden bg-[#e0e0e0] text-[12px] [font-family:Liberation_Sans,Noto_Sans_CJK_SC,sans-serif]">
      <TitleBar />
      <Ribbon />
      <div className="flex h-[882px] shrink-0">
        <LeftPanel />
        <div className="w-[2px] shrink-0 bg-[#cacaca]" />
        <RightPanel />
        <SideStrip />
      </div>
      <div className="flex flex-1 justify-end border-t border-black bg-[#5a5a5a] pr-[52px]">
        <div className="my-[2px] flex w-[106px] items-center border-x border-[#c8c8c8] pl-[2px] text-[11px] tracking-[0.1px] text-[#d8d8d8]">11403.29, 11498.72</div>
      </div>
    </div>
  );
}
